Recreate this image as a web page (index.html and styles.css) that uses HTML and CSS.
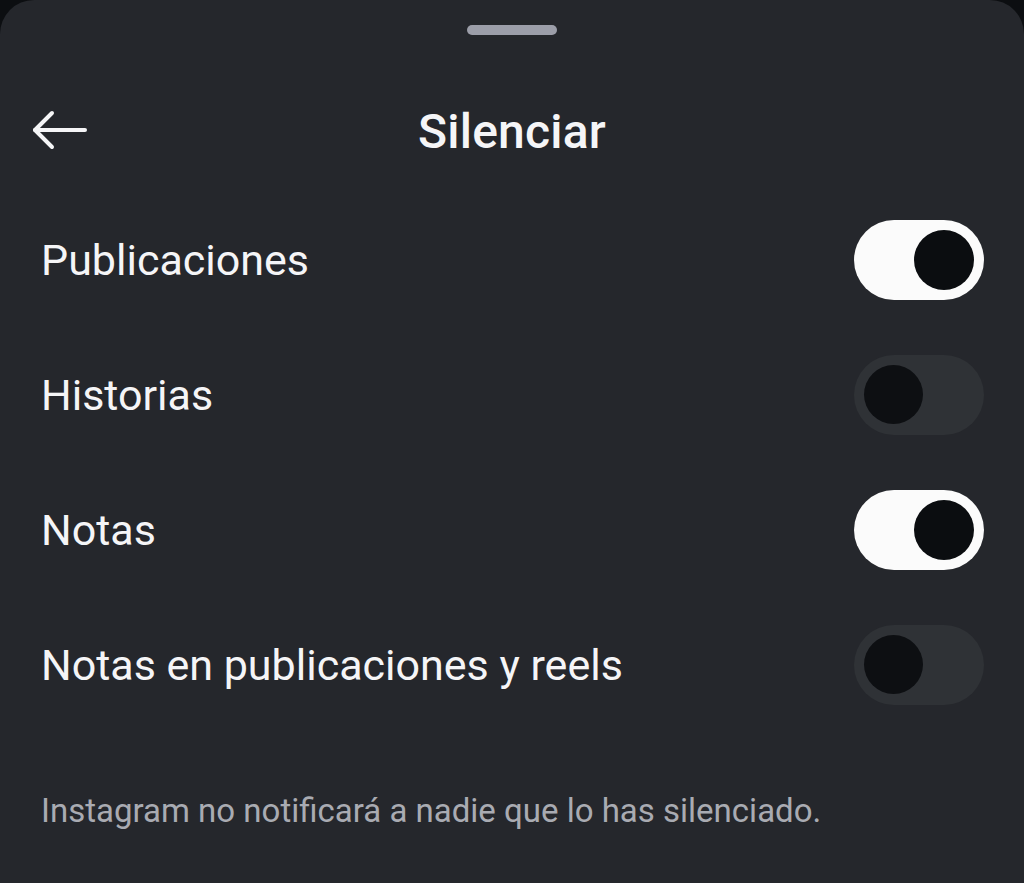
FILE: index.html
```html
<!DOCTYPE html>
<html lang="es">
<head>
<meta charset="utf-8">
<title>Silenciar</title>
<link rel="stylesheet" href="styles.css">
</head>
<body>
<div class="sheet">
  <div class="handle"></div>
  <header class="header">
    <button class="back" aria-label="Atrás">
      <svg width="58" height="42" viewBox="0 0 58 42" fill="none" stroke="#f5f5f7" stroke-width="4" stroke-linecap="round" stroke-linejoin="round">
        <path d="M4 20H54"/>
        <path d="M21 3L4 20L21 37"/>
      </svg>
    </button>
    <h1 class="title">Silenciar</h1>
  </header>
  <ul class="list">
    <li class="row"><span class="label">Publicaciones</span><span class="toggle on"><span class="knob"></span></span></li>
    <li class="row"><span class="label">Historias</span><span class="toggle off"><span class="knob"></span></span></li>
    <li class="row"><span class="label">Notas</span><span class="toggle on"><span class="knob"></span></span></li>
    <li class="row"><span class="label">Notas en publicaciones y reels</span><span class="toggle off"><span class="knob"></span></span></li>
  </ul>
  <p class="note">Instagram no notificará a nadie que lo has silenciado.</p>
</div>
</body>
</html>
```
FILE: styles.css
```css
* { box-sizing: border-box; }
html, body {
  margin: 0;
  padding: 0;
  background: #0c0e11;
}
body {
  width: 1024px;
  height: 883px;
  overflow: hidden;
  font-family: Roboto, "Noto Sans", sans-serif;
}
.sheet {
  width: 1024px;
  height: 883px;
  background: #25272c;
  border-radius: 34px 34px 0 0;
  padding-top: 25px;
}
.handle {
  width: 90px;
  height: 10px;
  border-radius: 5px;
  background: #9c9ea9;
  margin: 0 auto;
}
.header {
  position: relative;
  height: 70px;
  margin-top: 61px;
  display: flex;
  align-items: center;
  justify-content: center;
}
.back {
  position: absolute;
  left: 31px;
  top: 14px;
  padding: 0;
  border: 0;
  background: none;
  display: flex;
}
.title {
  margin: 0;
  font-size: 48px;
  font-weight: 500;
  color: #f5f5f7;
  letter-spacing: 0.2px;
}
.list {
  list-style: none;
  margin: 26px 0 0;
  padding: 0;
}
.row {
  height: 135px;
  display: flex;
  align-items: center;
  justify-content: space-between;
  padding: 0 40px 0 41px;
}
.label {
  font-size: 43px;
  color: #f5f5f7;
}
.toggle {
  width: 130px;
  height: 80px;
  border-radius: 40px;
  display: flex;
  align-items: center;
  padding: 0 10px;
}
.toggle .knob {
  width: 60px;
  height: 60px;
  border-radius: 50%;
  background: #0b0d10;
}
.toggle.on {
  background: #fbfbfb;
  justify-content: flex-end;
}
.toggle.off {
  background: #2f3236;
  justify-content: flex-start;
}
.toggle.off .knob {
  width: 59px;
  height: 59px;
  background: #0d0f12;
}
.note {
  margin: 60px 0 0 41px;
  font-size: 33px;
  line-height: 38px;
  color: #a9abb2;
}
```
